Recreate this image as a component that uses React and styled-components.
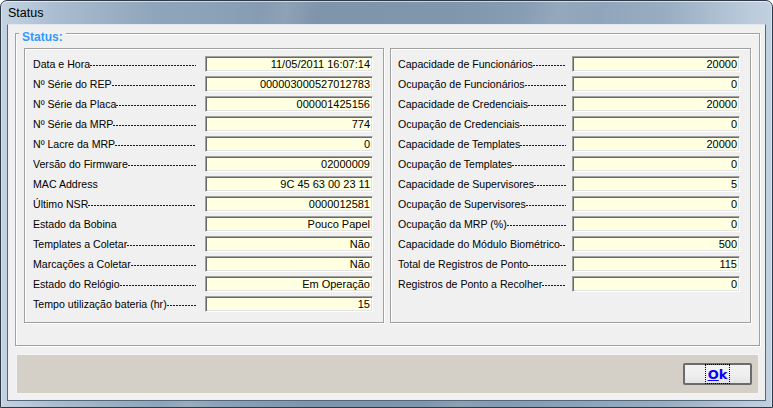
import React from 'react'
import styled, { createGlobalStyle } from 'styled-components'

const GlobalStyle = createGlobalStyle`
  html, body {
    margin: 0;
    padding: 0;
    background: #ffffff;
    overflow: hidden;
  }
  body {
    font-family: "Liberation Sans", Arial, sans-serif;
  }
  * {
    box-sizing: border-box;
  }
`

const Window = styled.div`
  width: 773px;
  height: 408px;
  display: flex;
  flex-direction: column;
  padding: 0 6px 6px 6px;
  border: 1px solid #2f3a46;
  border-radius: 7px 7px 0 0;
  background:
    linear-gradient(104deg, rgba(255, 255, 255, 0) 30%, rgba(255, 255, 255, 0.1) 33%, rgba(255, 255, 255, 0) 37%,
      rgba(255, 255, 255, 0) 60%, rgba(255, 255, 255, 0.09) 64%, rgba(255, 255, 255, 0) 69%),
    linear-gradient(90deg, #c4d3e2 0%, #aabdd0 7%, #8fa5bb 20%, #8aa0b6 30%, #7e94ab 40%, #8096ad 58%,
      #8aa0b6 72%, #98adc2 86%, #b7c8d8 96%, #c2d1e0 100%);
  box-shadow: inset 0 1px 0 rgba(255, 255, 255, 0.6), inset 1px 0 0 rgba(255, 255, 255, 0.35),
    inset -1px 0 0 rgba(255, 255, 255, 0.35);
`

const TitleBar = styled.div`
  height: 23px;
  display: flex;
  align-items: center;
  padding-left: 1px;
  font-size: 12.5px;
  color: #000000;
`

const Client = styled.div`
  flex: 1;
  display: flex;
  flex-direction: column;
  background: #f0f0f0;
  border: 1px solid #56677a;
  border-top-color: #dfe6ed;
  padding: 8px 5px 6px 7px;
`

const GroupBox = styled.div`
  position: relative;
  height: 313px;
  padding: 14px 8px 22px 8px;
  border: 1px solid #a0a0a0;
  box-shadow: inset 1px 1px 0 #ffffff, 1px 1px 0 #ffffff;
`

const Legend = styled.span`
  position: absolute;
  top: -4px;
  left: 3px;
  padding: 0 3px;
  background: #f0f0f0;
  font-size: 12px;
  font-weight: bold;
  line-height: 14px;
  color: #3399ff;
`

const Columns = styled.div`
  display: grid;
  grid-template-columns: 360px 361px;
  gap: 6px;
  height: 275px;
`

const Panel = styled.div`
  display: flex;
  flex-direction: column;
  padding: 5px 10px 8px ${props => props.$left}px;
  border: 1px solid #a0a0a0;
  box-shadow: inset 1px 1px 0 #ffffff, 1px 1px 0 #ffffff;
`

const Row = styled.div`
  display: flex;
  align-items: center;
  height: 20px;
`

const Label = styled.div`
  flex: 1;
  min-width: 0;
  display: flex;
  align-items: center;
  margin-right: ${props => props.$gap}px;
  overflow: hidden;
  white-space: nowrap;
  font-size: 10.6px;
  line-height: 14px;
  color: #000000;
`

const Dashes = styled.span`
  flex: 1;
  min-width: 0;
  height: 1px;
  margin-top: 2px;
  background: repeating-linear-gradient(90deg, #1a1a1a 0 2px, transparent 2px 3px);
`

const Field = styled.div`
  flex: none;
  width: 168px;
  height: 16px;
  padding: 0 2px;
  background: #ffffe1;
  border-top: 1px solid #a0a0a0;
  border-left: 1px solid #a0a0a0;
  border-right: 1px solid #ffffff;
  border-bottom: 1px solid #ffffff;
  box-shadow: inset 1px 1px 0 #696969, inset -1px -1px 0 #e3e3e3;
  font-size: 11px;
  line-height: 14px;
  text-align: right;
  color: #000000;
  white-space: nowrap;
`

const ButtonBar = styled.div`
  height: 40px;
  margin: 8px 1px 0 1px;
  display: flex;
  align-items: center;
  justify-content: flex-end;
  padding-right: 6px;
  background: #d4d0c8;
  border: 1px solid #f4f4f4;
`

const Button = styled.button`
  width: 69px;
  height: 22px;
  display: flex;
  align-items: center;
  justify-content: center;
  padding: 0;
  border: 2px solid #6b6b6b;
  border-radius: 2px;
  background: linear-gradient(#f3f3f3 0%, #efefef 55%, #e4e4e4 100%);
  font-family: "DejaVu Sans", "Liberation Sans", sans-serif;
  font-size: 13px;
  font-weight: bold;
  color: #0000ff;
  cursor: default;

  span {
    outline: 1px dotted #000000;
    padding: 2px 2px 1px 2px;
    line-height: 15px;
  }

  u {
    text-decoration: underline;
    text-underline-offset: 1px;
  }
`

const leftItems = [
  { label: 'Data e Hora', value: '11/05/2011 16:07:14' },
  { label: 'Nº Série do REP', value: '000003000527012783' },
  { label: 'Nº Série da Placa', value: '000001425156' },
  { label: 'Nº Série da MRP', value: '774' },
  { label: 'Nº Lacre da MRP', value: '0' },
  { label: 'Versão do Firmware', value: '02000009' },
  { label: 'MAC Address', value: '9C 45 63 00 23 11', plain: true },
  { label: 'Último NSR', value: '0000012581' },
  { label: 'Estado da Bobina', value: 'Pouco Papel', plain: true },
  { label: 'Templates a Coletar', value: 'Não' },
  { label: 'Marcações a Coletar', value: 'Não' },
  { label: 'Estado do Relógio', value: 'Em Operação' },
  { label: 'Tempo utilização bateria (hr)', value: '15' }
]

const rightItems = [
  { label: 'Capacidade de Funcionários', value: '20000' },
  { label: 'Ocupação de Funcionários', value: '0' },
  { label: 'Capacidade de Credenciais', value: '20000' },
  { label: 'Ocupação de Credenciais', value: '0' },
  { label: 'Capacidade de Templates', value: '20000' },
  { label: 'Ocupação de Templates', value: '0' },
  { label: 'Capacidade de Supervisores', value: '5' },
  { label: 'Ocupação de Supervisores', value: '0' },
  { label: 'Ocupação da MRP (%)', value: '0' },
  { label: 'Capacidade do Módulo Biométrico', value: '500' },
  { label: 'Total de Registros de Ponto', value: '115' },
  { label: 'Registros de Ponto a Recolher', value: '0' }
]

const InfoRow = ({ item, gap }) => (
  <Row>
    <Label $gap={gap}>
      <span>{item.label}</span>
      {!item.plain && <Dashes />}
    </Label>
    <Field>{item.value}</Field>
  </Row>
)

const InfoPanel = ({ items, left, gap }) => (
  <Panel $left={left}>
    {items.map((item, index) => (
      <InfoRow key={index} item={item} gap={gap} />
    ))}
  </Panel>
)

export default function App() {
  return (
    <>
      <GlobalStyle />
      <Window>
        <TitleBar>Status</TitleBar>
        <Client>
          <GroupBox>
            <Legend>Status:</Legend>
            <Columns>
              <InfoPanel items={leftItems} left={8} gap={9} />
              <InfoPanel items={rightItems} left={7} gap={6} />
            </Columns>
          </GroupBox>
          <ButtonBar>
            <Button>
              <span>
                <u>O</u>k
              </span>
            </Button>
          </ButtonBar>
        </Client>
      </Window>
    </>
  )
}
